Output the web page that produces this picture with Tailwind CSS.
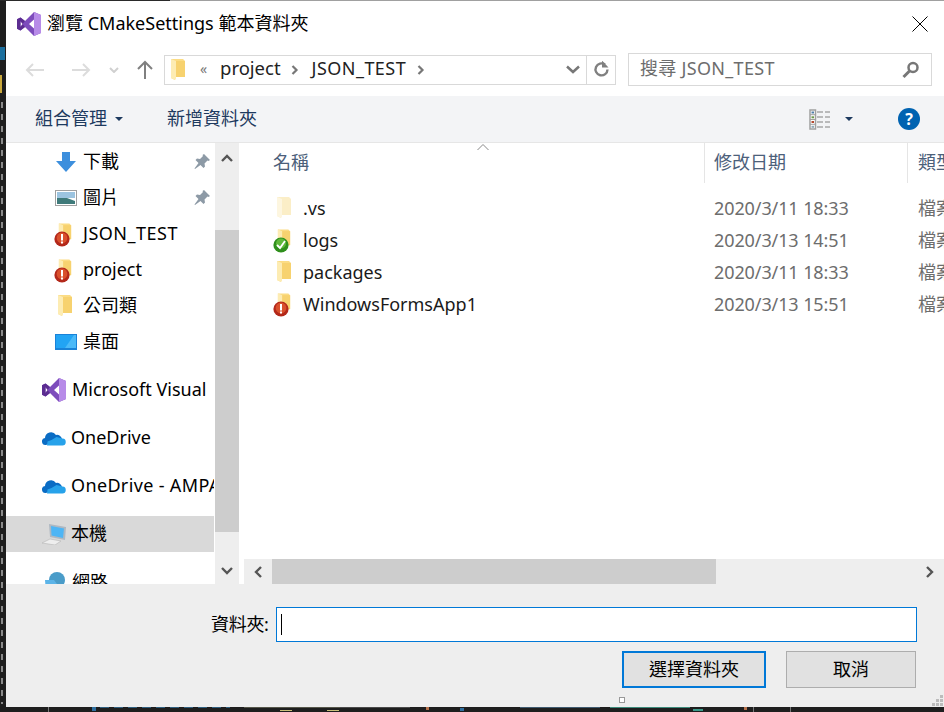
<!DOCTYPE html>
<html lang="zh-Hant">
<head>
    <meta charset="UTF-8">
    <title>瀏覽 CMakeSettings 範本資料夾</title>
    <script src="https://cdn.jsdelivr.net/npm/@tailwindcss/browser@4"></script>
</head>
<body class="w-[944px] h-[712px] overflow-hidden bg-[#1e1e1e] font-['Noto_Sans','Noto_Sans_CJK_TC',sans-serif] text-[18px] text-black">
    <svg width="0" height="0" class="absolute">
        <defs>
            <symbol id="folder" viewBox="0 0 16 24">
                <path d="M1 1h12l2 2v16H6l-1 3-4-2z" fill="#fbdc84"/>
                <path d="M1 1l5 2v17l-1 2-4-2z" fill="#fdecb3"/>
                <path d="M6 3h9v16H6z" fill="#f7d26f"/>
            </symbol>
            <symbol id="folderpale" viewBox="0 0 16 24">
                <path d="M1 1h12l2 2v16H6l-1 3-4-2z" fill="#fbeec7"/>
                <path d="M1 1l5 2v17l-1 2-4-2z" fill="#fdf6e0"/>
            </symbol>
            <symbol id="alert" viewBox="0 0 16 16">
                <circle cx="8" cy="8" r="7.6" fill="#b3281a"/>
                <circle cx="8" cy="7" r="5.4" fill="#d9502c"/>
                <rect x="7" y="3" width="2" height="6.5" fill="#fff"/>
                <rect x="7" y="10.5" width="2" height="2" fill="#fff"/>
            </symbol>
            <symbol id="vs" viewBox="0 0 24 24">
                <path d="M17 0l7 3v18l-7 3-9-9-4.500 3.500L0 16.800V7.200L3.500 5.500 8 9z" fill="#7d4cbc"/>
                <path d="M17 0l7 3v18l-7 3z" fill="#b78be8"/>
                <path d="M3.500 9.300v5.400L6 12zM17 7.500L12 12l5 4.500z" fill="#fff"/>
                <path d="M0 7.200L3.500 5.500 8 9 5.500 12 3.500 9v6l2-3L8 15l-4.500 3.500L0 16.800z" fill="#5c2d91"/>
            </symbol>
            <symbol id="cloud" viewBox="0 0 24 16">
                <path d="M4 15a3.500 3.500 0 0 1-1-7 6 6 0 0 1 11-3 5 5 0 0 1 6 4z" fill="#0a6cc4"/>
                <path d="M5 15.500h15a3.500 3.500 0 0 0 .5-7l-6-1.500-5 3-4 1.500z" fill="#27a2ea"/>
            </symbol>
            <symbol id="pin" viewBox="0 0 16 16">
                <path d="M10 0l6 6-1.500 1-1-.5-3 3 .5 3-1.500 1.500-3-3L1 15l-.500-.500L4.500 9l-3-3L3 4.500l3 .5 3-3-.500-1z" fill="#8d9aa6"/>
            </symbol>
        </defs>
    </svg>

    <!-- editor behind the dialog: what shows round its edges -->
    <div class="absolute left-[1px] top-[102px] w-[2px] h-[602px] bg-[repeating-linear-gradient(180deg,#8a8a8a_0,#8a8a8a_6px,transparent_6px,transparent_12px)]"></div>
    <div class="absolute left-0 top-[47px] w-[5px] h-[13px] bg-[#1b6f9e]"></div>
    <div class="absolute left-0 top-[75px] w-[4px] h-[18px] border-l-2 border-[#c9a83c]"></div>
    <div class="absolute left-0 top-0 w-[170px] h-px bg-[#2a2a2a]"></div>
    <div class="absolute left-[170px] top-0 w-[774px] h-px bg-[#a0a0a0]"></div>

    <div class="absolute left-[6px] top-px w-[938px] h-[706px] flex flex-col bg-white overflow-hidden">
        <!-- title bar -->
        <div class="h-[47px] pb-[2px] flex items-center shrink-0">
            <svg class="w-6 h-6 ml-[11px] shrink-0"><use href="#vs"/></svg>
            <span class="ml-[6px]">瀏覽 CMakeSettings 範本資料夾</span>
            <svg class="w-4 h-4 ml-auto mr-[16px]" viewBox="0 0 16 16"><path d="M.5.500l15 15M15.500.500l-15 15" stroke="#000" stroke-width="1" fill="none"/></svg>
        </div>

        <!-- address row -->
        <div class="h-[48px] pb-[5px] flex items-center shrink-0">
            <svg class="w-5 h-4 ml-[19px] shrink-0" viewBox="0 0 20 16"><path d="M19 8H2M8 2L2 8l6 6" stroke="#dcdcdc" stroke-width="2" fill="none"/></svg>
            <svg class="w-5 h-4 ml-[26px] shrink-0" viewBox="0 0 20 16"><path d="M1 8h17M12 2l6 6-6 6" stroke="#dcdcdc" stroke-width="2" fill="none"/></svg>
            <svg class="w-[10px] h-[6px] ml-[18px] shrink-0" viewBox="0 0 10 6"><path d="M1 1l4 4 4-4" stroke="#d0d0d0" stroke-width="2" fill="none"/></svg>
            <svg class="w-4 h-5 ml-[18px] shrink-0" viewBox="0 0 16 20"><path d="M8 19V2M1 9l7-7 7 7" stroke="#808080" stroke-width="2" fill="none"/></svg>
            <div class="ml-[11px] w-[452px] h-[30px] shrink-0 border border-[#d9d9d9] flex items-center">
                <svg class="w-[16px] h-[24px] ml-[5px] shrink-0"><use href="#folder"/></svg>
                <span class="ml-[14px] w-[10px] mb-[2px] text-[14px] text-[#777]">«</span>
                <span class="ml-[10px] mb-[3px] text-[18.5px] text-[#222]">project</span>
                <svg class="w-2 h-[10px] ml-[10px] shrink-0" viewBox="0 0 8 10"><path d="M1.500 1l4 4-4 4" stroke="#777" stroke-width="2.200" fill="none"/></svg>
                <span class="ml-[13px] mb-[3px] tracking-[0.45px] text-[#222]">JSON_TEST</span>
                <svg class="w-2 h-[10px] ml-[11px] shrink-0" viewBox="0 0 8 10"><path d="M1.500 1l4 4-4 4" stroke="#777" stroke-width="2.200" fill="none"/></svg>
                <svg class="w-[14px] h-[9px] ml-auto mr-[6px] shrink-0" viewBox="0 0 14 9"><path d="M1 1.500l6 5.500 6-5.500" stroke="#777" stroke-width="2.500" fill="none"/></svg>
                <div class="w-[29px] h-full border-l border-[#d9d9d9] flex items-center justify-center">
                    <svg class="w-[17px] h-[17px]" viewBox="0 0 17 17"><path d="M14.500 8.500a6 6 0 1 1-2.500-5" stroke="#808080" stroke-width="2.400" fill="none"/><path d="M9 0v7h6.500z" transform="translate(0 -.5)" fill="#808080"/></svg>
                </div>
            </div>
            <div class="ml-[12px] w-[304px] h-[33px] shrink-0 border border-[#d9d9d9] flex items-center text-[#6d6d6d]">
                <span class="ml-[11px] mb-[2px] tracking-[0.3px]">搜尋 JSON_TEST</span>
                <svg class="w-[18px] h-[18px] ml-auto mr-[11px]" viewBox="0 0 18 18"><circle cx="11" cy="6.500" r="4.500" stroke="#777" stroke-width="2.500" fill="none"/><path d="M7.500 10L1.500 16" stroke="#777" stroke-width="3" fill="none"/></svg>
            </div>
        </div>

        <!-- command bar -->
        <div class="h-[47px] shrink-0 bg-[#f3f4f6] border-b border-[#e6e6e6] flex items-center text-[#1e3a5f]">
            <span class="ml-[29px] mb-[2px]">組合管理</span>
            <svg class="w-[8px] h-[4px] ml-[8px]" viewBox="0 0 8 4"><path d="M0 0h8L4 4z" fill="#1e3a5f"/></svg>
            <span class="ml-[44px] mb-[2px]">新增資料夾</span>
            <svg class="w-[21px] h-[21px] ml-auto" viewBox="0 0 21 21">
                <rect x="1" y="1" width="5.500" height="19" fill="#fff" stroke="#a0a0a0" stroke-width="1.500"/>
                <path d="M1 5.700h5.500M1 10.500h5.500M1 15.300h5.500" stroke="#a0a0a0"/>
                <rect x="2.500" y="2.500" width="2.500" height="2" fill="#4f7fa8"/>
                <rect x="2.500" y="7.300" width="2.500" height="2" fill="#6d9a4a"/>
                <rect x="2.500" y="12" width="2.500" height="2" fill="#b5482e"/>
                <rect x="2.500" y="16.800" width="2.500" height="2" fill="#8fa8b8"/>
                <path d="M8 3h6M16 3h5M8 8h6M16 8h5M8 13h6M16 13h5M8 18h6M16 18h5" stroke="#808080"/>
            </svg>
            <svg class="w-[8px] h-[4px] ml-[15px]" viewBox="0 0 8 4"><path d="M0 0h8L4 4z" fill="#1e3a5f"/></svg>
            <div class="ml-[45px] mr-[24px] w-[22px] h-[22px] rounded-full bg-[#0063b1] text-white text-[16px] font-bold flex items-center justify-center">?</div>
        </div>

        <!-- panes -->
        <div class="relative flex h-[441px] shrink-0 overflow-hidden">
            <!-- navigation -->
            <div class="w-[208px] shrink-0 overflow-hidden pt-px">
                <div class="h-9 flex items-center">
                    <svg class="w-[22px] h-[20px] ml-[49px] shrink-0" viewBox="0 0 22 20"><path d="M7 0h8v9h6L11 20 1 9h6z" fill="#3d8fdd"/></svg>
                    <span class="ml-[6px] mb-[2px]">下載</span>
                    <svg class="w-4 h-4 ml-auto mr-[4px]"><use href="#pin"/></svg>
                </div>
                <div class="h-9 flex items-center">
                    <svg class="w-[22px] h-[16px] ml-[49px] shrink-0" viewBox="0 0 22 16"><rect x=".5" y=".5" width="21" height="15" fill="#fff" stroke="#a0a0a0"/><rect x="2" y="2" width="18" height="6" fill="#9cc4e0"/><path d="M2 8l10 0 8 3v3H2z" fill="#3f7a7a"/></svg>
                    <span class="ml-[6px] mb-[2px]">圖片</span>
                    <svg class="w-4 h-4 ml-auto mr-[4px]"><use href="#pin"/></svg>
                </div>
                <div class="h-9 flex items-center">
                    <span class="relative w-[18px] h-[24px] ml-[48px] shrink-0"><svg class="absolute left-[4px] top-0 w-[14px] h-[22px]"><use href="#folder"/></svg><svg class="absolute left-0 top-[9px] w-[16px] h-[16px]"><use href="#alert"/></svg></span>
                    <span class="ml-[11px] mb-[2px] tracking-[0.5px]">JSON_TEST</span>
                </div>
                <div class="h-9 flex items-center">
                    <span class="relative w-[18px] h-[24px] ml-[48px] shrink-0"><svg class="absolute left-[4px] top-0 w-[14px] h-[22px]"><use href="#folder"/></svg><svg class="absolute left-0 top-[9px] w-[16px] h-[16px]"><use href="#alert"/></svg></span>
                    <span class="ml-[11px] mb-[2px]">project</span>
                </div>
                <div class="h-9 flex items-center">
                    <svg class="w-[16px] h-[24px] ml-[51px] shrink-0"><use href="#folder"/></svg>
                    <span class="ml-[10px] mb-[2px]">公司類</span>
                </div>
                <div class="h-9 flex items-center">
                    <svg class="w-[22px] h-[16px] ml-[49px] shrink-0" viewBox="0 0 22 16"><rect width="22" height="16" fill="#1a82d8"/><rect x="1" y="1" width="20" height="13" fill="#22a4f4"/><path d="M10 14L19 1h2v13z" fill="#4cbaf8"/></svg>
                    <span class="ml-[6px] mb-[2px]">桌面</span>
                </div>
                <div class="h-9 mt-3 flex items-center">
                    <svg class="w-6 h-6 ml-[36px] shrink-0"><use href="#vs"/></svg>
                    <span class="ml-[6px] mb-[2px] whitespace-nowrap">Microsoft Visual</span>
                </div>
                <div class="h-9 mt-3 flex items-center">
                    <svg class="w-6 h-4 ml-[36px] shrink-0"><use href="#cloud"/></svg>
                    <span class="ml-[5px] mb-[2px]">OneDrive</span>
                </div>
                <div class="h-9 mt-3 flex items-center">
                    <svg class="w-6 h-4 ml-[36px] shrink-0"><use href="#cloud"/></svg>
                    <span class="ml-[5px] mb-[2px] whitespace-nowrap tracking-[0.35px]">OneDrive - AMPA</span>
                </div>
                <div class="h-9 mt-3 flex items-center bg-[#d9d9d9]">
                    <svg class="w-[24px] h-[22px] ml-[36px] shrink-0" viewBox="0 0 24 22"><path d="M7 1l17 3-1 13-15-3z" fill="#aeb8c2"/><path d="M9 3l13 2.500-1 9.500L9.500 12.500z" fill="#4db5f5"/><path d="M0 20l8-4 11 2-6 4z" fill="#eeeeee" stroke="#b5b5b5" stroke-width=".6"/></svg>
                    <span class="ml-[5px] mb-[2px]">本機</span>
                </div>
                <div class="h-9 mt-3 flex items-center">
                    <svg class="w-[22px] h-[22px] ml-[38px] shrink-0" viewBox="0 0 22 22"><circle cx="13" cy="9" r="8" fill="#4a9cc9"/><path d="M1 9h9l3 4v8H2z" fill="#5cb4e8"/></svg>
                    <span class="ml-[6px]">網路</span>
                </div>
            </div>

            <!-- navigation scrollbar -->
            <div class="ml-px w-[24px] shrink-0 h-[441px] bg-[#eeeeee] flex flex-col items-center">
                <svg class="w-[12px] h-[8px] mt-[11px]" viewBox="0 0 12 8"><path d="M1 7l5-5 5 5" stroke="#555" stroke-width="2.400" fill="none"/></svg>
                <div class="w-full h-[302px] bg-[#cdcdcd] mt-[68px]"></div>
                <svg class="w-[12px] h-[8px] mt-[35px]" viewBox="0 0 12 8"><path d="M1 1l5 5 5-5" stroke="#555" stroke-width="2.400" fill="none"/></svg>
            </div>

            <!-- file list -->
            <div class="ml-[5px] w-[700px] shrink-0 flex flex-col overflow-hidden">
                <div class="relative h-[40px] shrink-0 flex text-[#4c607a]">
                    <svg class="absolute left-[233px] top-px w-[12px] h-[6px]" viewBox="0 0 12 6"><path d="M.5 6L6 .5 11.500 6" stroke="#888" fill="none"/></svg>
                    <div class="w-[461px] shrink-0 border-r border-[#e5e5e5] pl-[29px] leading-[38px]">名稱</div>
                    <div class="w-[203px] shrink-0 border-r border-[#e5e5e5] pl-[9px] leading-[38px]">修改日期</div>
                    <div class="pl-[10px] shrink-0 leading-[38px] whitespace-nowrap">類型</div>
                </div>
                <div class="flex-1 pt-[9px] text-[#1a1a1a]">
                    <div class="h-8 flex items-center">
                        <svg class="w-[16px] h-[24px] ml-[32px] shrink-0"><use href="#folderpale"/></svg>
                        <span class="w-[411px] shrink-0 ml-[11px]">.vs</span>
                        <span class="w-[204px] shrink-0 text-[#6d6d6d] tracking-[-0.1px]">2020/3/11 18:33</span>
                        <span class="shrink-0 text-[#6d6d6d] whitespace-nowrap">檔案資料夾</span>
                    </div>
                    <div class="h-8 flex items-center">
                        <span class="relative w-[18px] h-[24px] ml-[29px] shrink-0"><svg class="absolute left-[4px] top-0 w-[14px] h-[22px]"><use href="#folder"/></svg><svg class="absolute left-0 top-[9px] w-[16px] h-[16px]" viewBox="0 0 16 16"><circle cx="8" cy="8" r="7.600" fill="#2f8f1c"/><circle cx="8" cy="6.500" r="5" fill="#5fb83a"/><path d="M4 8l3 3 5-7" stroke="#fff" stroke-width="1.800" fill="none"/></svg></span>
                        <span class="w-[411px] shrink-0 ml-[12px]">logs</span>
                        <span class="w-[204px] shrink-0 text-[#6d6d6d] tracking-[-0.1px]">2020/3/13 14:51</span>
                        <span class="shrink-0 text-[#6d6d6d] whitespace-nowrap">檔案資料夾</span>
                    </div>
                    <div class="h-8 flex items-center">
                        <svg class="w-[16px] h-[24px] ml-[32px] shrink-0"><use href="#folder"/></svg>
                        <span class="w-[411px] shrink-0 ml-[11px]">packages</span>
                        <span class="w-[204px] shrink-0 text-[#6d6d6d] tracking-[-0.1px]">2020/3/11 18:33</span>
                        <span class="shrink-0 text-[#6d6d6d] whitespace-nowrap">檔案資料夾</span>
                    </div>
                    <div class="h-8 flex items-center">
                        <span class="relative w-[18px] h-[24px] ml-[29px] shrink-0"><svg class="absolute left-[4px] top-0 w-[14px] h-[22px]"><use href="#folder"/></svg><svg class="absolute left-0 top-[9px] w-[16px] h-[16px]"><use href="#alert"/></svg></span>
                        <span class="w-[411px] shrink-0 ml-[12px]">WindowsFormsApp1</span>
                        <span class="w-[204px] shrink-0 text-[#6d6d6d] tracking-[-0.1px]">2020/3/13 15:51</span>
                        <span class="shrink-0 text-[#6d6d6d] whitespace-nowrap">檔案資料夾</span>
                    </div>
                </div>
                <!-- horizontal scrollbar -->
                <div class="h-[25px] shrink-0 bg-[#eeeeee] flex items-center">
                    <svg class="w-2 h-3 ml-[10px]" viewBox="0 0 8 12"><path d="M7 1L2 6l5 5" stroke="#555" stroke-width="2.400" fill="none"/></svg>
                    <div class="ml-[10px] w-[444px] h-full bg-[#cdcdcd]"></div>
                    <svg class="w-2 h-3 ml-auto mr-[10px]" viewBox="0 0 8 12"><path d="M1 1l5 5-5 5" stroke="#555" stroke-width="2.400" fill="none"/></svg>
                </div>
            </div>
        </div>

        <!-- footer -->
        <div class="relative flex-1 bg-[#eeeeee]">
            <div class="flex items-center mt-[23px] h-[35px]">
                <span class="ml-[205px] w-[65px] whitespace-nowrap tracking-[-0.3px]">資料夾:</span>
                <div class="w-[641px] h-[35px] bg-white border border-[#0078d7] flex items-center">
                    <div class="ml-[4px] w-px h-[21px] bg-black"></div>
                </div>
            </div>
            <div class="flex mt-[9px] ml-[616px]">
                <div class="w-[144px] h-[37px] bg-[#e1e1e1] border-2 border-[#0078d7] flex items-center justify-center">選擇資料夾</div>
                <div class="ml-[20px] w-[130px] h-[37px] bg-[#e1e1e1] border border-[#adadad] flex items-center justify-center">取消</div>
            </div>
            <div class="absolute left-[613px] top-[113px] w-[6px] h-[6px] bg-white border-[1.5px] border-[#999]"></div>
            <svg class="absolute right-[1px] bottom-[1px] w-[11px] h-[11px]" viewBox="0 0 11 11" fill="#bcbcbc"><rect x="8" y="0" width="3" height="3"/><rect x="4" y="4" width="3" height="3"/><rect x="8" y="4" width="3" height="3"/><rect x="0" y="8" width="3" height="3"/><rect x="4" y="8" width="3" height="3"/><rect x="8" y="8" width="3" height="3"/></svg>
        </div>
    </div>

    <!-- bits of code under the dialog, only their tops show -->
    <div class="absolute left-[48px] top-[707px] w-px h-[5px] bg-[#777]"></div>
    <div class="absolute left-[92px] top-[707px] w-[4px] h-[4px] bg-[#2f6f9f]"></div>
    <div class="absolute left-[100px] top-[707px] w-[130px] h-px bg-[repeating-linear-gradient(90deg,#2f5f7f_0,#2f5f7f_9px,transparent_9px,transparent_14px)]"></div>
    <div class="absolute left-[244px] top-[707px] w-[96px] h-px bg-[#55564a]"></div>
    <div class="absolute left-[280px] top-[710px] w-[12px] h-px bg-[#c9c07a]"></div>
    <div class="absolute left-[327px] top-[710px] w-[12px] h-px bg-[#c9c07a]"></div>
    <div class="absolute left-[340px] top-[707px] w-[70px] h-px bg-[#4a4a4a]"></div>
    <div class="absolute left-[426px] top-[707px] w-[3px] h-[3px] bg-[#b5704a]"></div>
    <div class="absolute left-[460px] top-[708px] w-[4px] h-[3px] bg-[#2f6f9f]"></div>
    <div class="absolute left-[520px] top-[707px] w-[80px] h-px bg-[#3f5a6f]"></div>
    <div class="absolute left-[610px] top-[707px] w-[80px] h-px bg-[#3c8a7a]"></div>
    <div class="absolute left-[693px] top-[709px] w-[10px] h-[2px] bg-[#3c9a8a]"></div>
    <div class="absolute left-[744px] top-[707px] w-[3px] h-[3px] bg-[#b5704a]"></div>
    <div class="absolute left-[753px] top-[707px] w-px h-[5px] bg-[#777]"></div>
    <div class="absolute left-[790px] top-[707px] w-px h-[5px] bg-[#777]"></div>
</body>
</html>
